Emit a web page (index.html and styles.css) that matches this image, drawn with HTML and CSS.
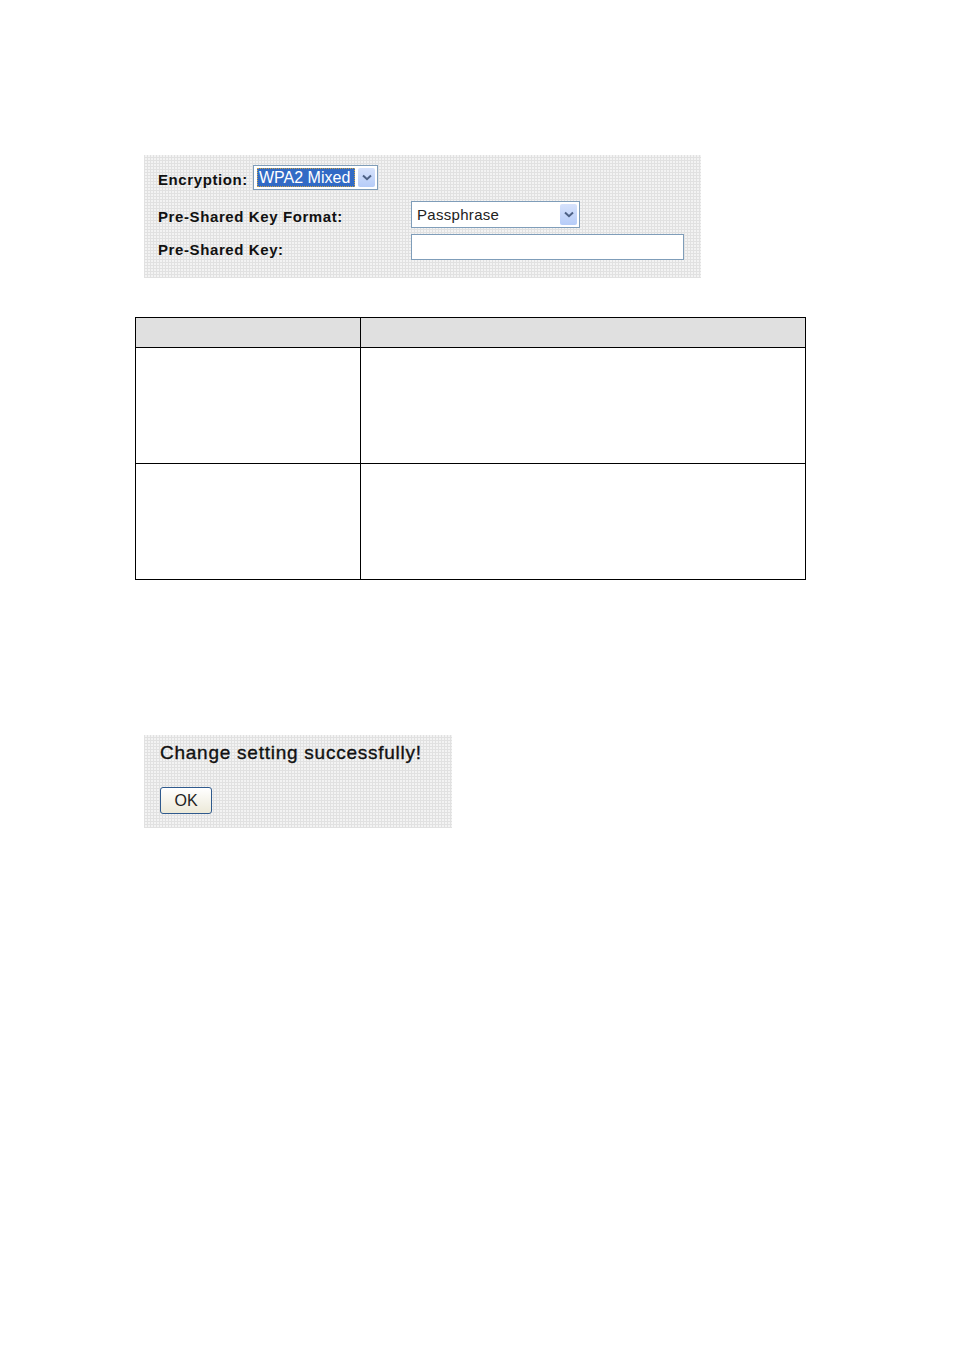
FILE: index.html
```html
<!DOCTYPE html>
<html lang="en">
<head>
  <meta charset="UTF-8">
  <title>Wireless Security</title>
  <link rel="stylesheet" href="styles.css">
</head>
<body>
  <div class="pagina">

    <div class="panel panel-seguridad">
      <div class="fila fila-cifrado">
        <span class="etiqueta">Encryption:</span>
        <div class="combo combo-cifrado">
          <span class="combo-valor seleccionado">WPA2 Mixed</span>
          <span class="combo-flecha">
            <svg width="10" height="7" viewBox="0 0 10 7"><path d="M1 1.5 L5 5.2 L9 1.5" fill="none" stroke="#4d6185" stroke-width="2"/></svg>
          </span>
        </div>
      </div>
      <div class="fila">
        <span class="etiqueta etiqueta-ancha">Pre-Shared Key Format:</span>
        <div class="combo combo-formato">
          <span class="combo-valor">Passphrase</span>
          <span class="combo-flecha">
            <svg width="10" height="7" viewBox="0 0 10 7"><path d="M1 1.5 L5 5.2 L9 1.5" fill="none" stroke="#4d6185" stroke-width="2"/></svg>
          </span>
        </div>
      </div>
      <div class="fila">
        <span class="etiqueta etiqueta-ancha">Pre-Shared Key:</span>
        <div class="campo-clave"></div>
      </div>
    </div>

    <table class="tabla">
      <tr class="cabecera">
        <td class="col-1"></td>
        <td class="col-2"></td>
      </tr>
      <tr class="fila-alta">
        <td></td>
        <td></td>
      </tr>
      <tr class="fila-alta">
        <td></td>
        <td></td>
      </tr>
    </table>

    <div class="panel panel-aviso">
      <div class="aviso-texto">Change setting successfully!</div>
      <button class="boton-ok">OK</button>
    </div>

  </div>
</body>
</html>
```

FILE: styles.css
```css
body {
  margin: 0;
  background: #fff;
  font-family: 'Liberation Sans', Arial, sans-serif;
  color: #111;
}

.pagina {
  padding-top: 155px;
  width: 954px;
}

/* Fondo cuadriculado de los paneles */
.panel {
  background-color: #f3f3f3;
  background-image:
    repeating-linear-gradient(0deg, #e1e1e1 0, #e1e1e1 1px, transparent 1px, transparent 3px),
    repeating-linear-gradient(90deg, #e1e1e1 0, #e1e1e1 1px, transparent 1px, transparent 3px);
}

.panel-seguridad {
  margin-left: 144px;
  width: 557px;
  height: 123px;
  box-sizing: border-box;
  padding: 10px 0 0 14px;
  display: flex;
  flex-direction: column;
  gap: 6px;
}

.fila {
  display: flex;
  align-items: center;
}

.fila-cifrado {
  margin-bottom: 5px;
}

.etiqueta {
  font-size: 15px;
  font-weight: bold;
  letter-spacing: 0.6px;
  color: #111;
  padding-top: 4px;
}

.fila-cifrado .etiqueta {
  width: 95px;
}

.etiqueta-ancha {
  width: 253px;
}

.combo {
  display: flex;
  align-items: center;
  background: #fff;
  border: 1px solid #7f9db9;
  box-sizing: border-box;
}

.combo-cifrado {
  width: 125px;
  height: 25px;
  padding-left: 3px;
}

.combo-formato {
  width: 169px;
  height: 27px;
  padding-left: 5px;
}

.combo-valor {
  flex: 1;
  font-size: 15px;
  letter-spacing: 0.3px;
  color: #222;
  line-height: 19px;
}

.seleccionado {
  flex: none;
  width: 98px;
  font-size: 16px;
  letter-spacing: 0;
  background: #316ac5;
  color: #fff;
  outline: 1px dotted #c9a24a;
  outline-offset: -1px;
  padding-left: 2px;
  box-sizing: border-box;
  margin-right: 3px;
}

.combo-flecha {
  width: 17px;
  height: 19px;
  margin-right: 2px;
  background: linear-gradient(#d6e2fc, #b6ccf8);
  border-radius: 2px;
  display: flex;
  align-items: center;
  justify-content: center;
}

.combo-formato .combo-flecha {
  height: 21px;
}

.campo-clave {
  width: 273px;
  height: 26px;
  box-sizing: border-box;
  background: #fff;
  border: 1px solid #7f9db9;
}

/* Tabla vacía */
.tabla {
  margin-top: 39px;
  margin-left: 135px;
  width: 671px;
  border-collapse: collapse;
}

.tabla td {
  border: 1px solid #000;
  padding: 0;
}

.cabecera td {
  height: 29px;
  background: #e0e0e0;
}

.col-1 {
  width: 224px;
}

.fila-alta td {
  height: 115px;
}

/* Aviso */
.panel-aviso {
  margin-top: 155px;
  margin-left: 144px;
  width: 308px;
  height: 93px;
  box-sizing: border-box;
  padding: 7px 0 0 16px;
}

.aviso-texto {
  font-size: 19px;
  color: #111;
  letter-spacing: 0.75px;
  -webkit-text-stroke: 0.35px #111;
}

.boton-ok {
  margin-top: 23px;
  width: 52px;
  height: 27px;
  font-family: 'Liberation Sans', Arial, sans-serif;
  font-size: 16px;
  color: #222;
  background: linear-gradient(#ffffff, #ece9d8);
  border: 1px solid #2f5a8d;
  border-radius: 3px;
  padding: 0;
}
```
